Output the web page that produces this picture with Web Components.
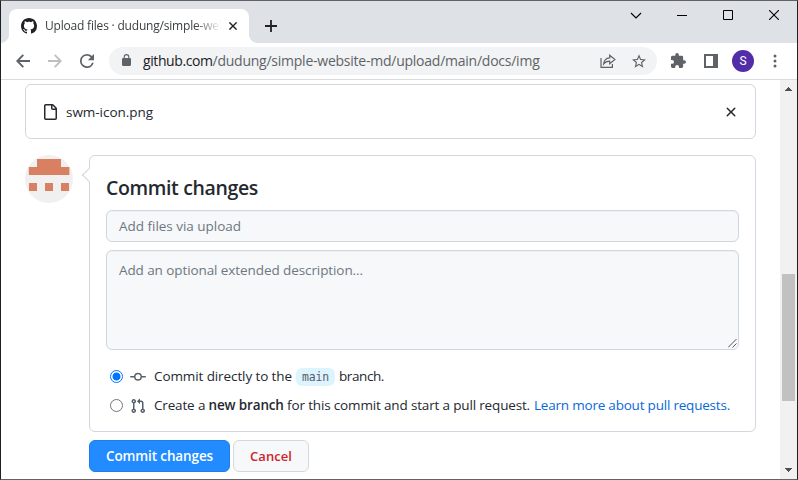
<!DOCTYPE html>
<html lang="en">
<head>
<meta charset="utf-8">
<title>Upload files · dudung/simple-website-md</title>
<style>
html,body{margin:0;height:100%;overflow:hidden}
body{font-family:"Open Sans","Noto Sans",sans-serif;font-size:13.5px;color:#24292f}
</style>
</head>
<body>
<browser-window></browser-window>
<script>
const define = (name, html, ready) => {
  const t = document.createElement('template');
  t.innerHTML = html;
  customElements.define(name, class extends HTMLElement {
    connectedCallback() {
      if (this.shadowRoot) return;
      this.attachShadow({mode: 'open'}).append(t.content.cloneNode(true));
      if (ready) ready(this);
    }
  });
};

/* A single line of text whose tracking is adjusted to fill the given width. */
define('fit-text', `<style>:host{display:inline-block;white-space:pre;flex:none}</style><slot></slot>`, el => {
  const target = +el.getAttribute('width');
  const n = el.textContent.length;
  el.style.letterSpacing = ((target - el.getBoundingClientRect().width) / n) + 'px';
  el.style.width = target + 'px';
});

const icons = {
  github: ['0 0 16 16', '<path fill="currentColor" d="M8 0C3.58 0 0 3.58 0 8c0 3.54 2.29 6.53 5.47 7.59.4.07.55-.17.55-.38 0-.19-.01-.82-.01-1.49-2.01.37-2.53-.49-2.69-.94-.09-.23-.48-.94-.82-1.13-.28-.15-.68-.52-.01-.53.63-.01 1.08.58 1.23.82.72 1.21 1.87.87 2.33.66.07-.52.28-.87.51-1.07-1.78-.2-3.64-.89-3.64-3.95 0-.87.31-1.59.82-2.15-.08-.2-.36-1.02.08-2.12 0 0 .67-.21 2.2.82.64-.18 1.32-.27 2-.27s1.36.09 2 .27c1.53-1.04 2.2-.82 2.2-.82.44 1.1.16 1.92.08 2.12.51.56.82 1.27.82 2.15 0 3.07-1.87 3.75-3.65 3.95.29.25.54.73.54 1.48 0 1.07-.01 1.93-.01 2.2 0 .21.15.46.55.38A8.01 8.01 0 0 0 16 8c0-4.42-3.58-8-8-8z"/>'],
  close: ['0 0 8 8', '<path stroke="currentColor" stroke-width="1.4" d="M.4.4l7.2 7.2M7.600.4L.4 7.600"/>'],
  plus: ['0 0 12 12', '<path stroke="currentColor" stroke-width="1.8" d="M6 0v12M0 6h12"/>'],
  chevron: ['0 0 12 12', '<path fill="none" stroke="currentColor" stroke-width="1.1" d="M1 3l5 5 5-5"/>'],
  min: ['0 0 10 10', '<path fill="currentColor" d="M0 5h10v1H0z"/>'],
  max: ['0 0 10 10', '<path fill="none" stroke="currentColor" d="M.5.5h9v9h-9z"/>'],
  wclose: ['0 0 10 10', '<path stroke="currentColor" stroke-width="1.1" d="M0 0l10 10M10 0L0 10"/>'],
  back: ['0 0 14 14', '<path fill="none" stroke="currentColor" stroke-width="1.9" d="M14 7H1.6M7.3.8L1.3 7l6 6.2"/>'],
  forward: ['0 0 14 14', '<path fill="none" stroke="currentColor" stroke-width="1.9" d="M0 7h12.4M6.7.8l6 6.2-6 6.2"/>'],
  reload: ['4 4 16 16', '<path fill="currentColor" d="M17.65 6.35A7.96 7.96 0 0 0 12 4a8 8 0 1 0 7.73 10h-2.08A6 6 0 1 1 12 6c1.66 0 3.14.69 4.22 1.78L13 11h7V4z"/>'],
  lock: ['4 1 16 21', '<path fill="currentColor" d="M18 8h-1V6A5 5 0 0 0 7 6v2H6a2 2 0 0 0-2 2v10c0 1.100.9 2 2 2h12a2 2 0 0 0 2-2V10a2 2 0 0 0-2-2zM8.900 8V6a3.100 3.100 0 0 1 6.200 0v2z"/>'],
  share: ['0 0 16 14', '<path fill="none" stroke="currentColor" stroke-width="1.200" d="M1 4v9.300h11.400V10M3.600 10C4 6.300 6.200 4.200 9.700 3.900V1.200L14.900 5.500 9.700 9.800V7.200C7 7.200 5 8.100 3.600 10z"/>'],
  star: ['2 2 20 19', '<path fill="currentColor" d="M22 9.240l-7.190-.62L12 2 9.190 8.630 2 9.240l5.460 4.730L5.820 21 12 17.270 18.180 21l-1.630-7.030zM12 15.400l-3.760 2.270 1-4.280-3.320-2.880 4.380-.38L12 6.100l1.710 4.040 4.380.38-3.320 2.880 1 4.280z"/>'],
  puzzle: ['2 1 21 21', '<path fill="currentColor" d="M20.500 11H19V7a2 2 0 0 0-2-2h-4V3.500a2.500 2.500 0 0 0-5 0V5H4a2 2 0 0 0-1.990 2v3.800H3.500a2.700 2.700 0 0 1 0 5.400H2V20c0 1.100.9 2 2 2h3.800v-1.500a2.700 2.700 0 0 1 5.400 0V22H17a2 2 0 0 0 2-2v-4h1.500a2.500 2.500 0 0 0 0-5z"/>'],
  panel: ['0 0 14 14', '<path fill="currentColor" fill-rule="evenodd" d="M0 0h14v14H0zM2 2v10h7V2z"/>'],
  dots: ['0 0 4 14', '<g fill="currentColor"><circle cx="2" cy="2" r="1.500"/><circle cx="2" cy="7" r="1.500"/><circle cx="2" cy="12" r="1.500"/></g>'],
  file: ['0 0 16 16', '<path fill="currentColor" d="M3.750 1.500a.25.25 0 0 0-.25.25v12.500c0 .138.112.25.25.25h9.500a.25.25 0 0 0 .25-.25V6h-2.750A1.750 1.750 0 0 1 9 4.250V1.500zm6.750.062V4.250c0 .138.112.25.25.25h2.688l-.011-.013-2.914-2.914zM2 1.750C2 .784 2.784 0 3.750 0h6.586c.464 0 .909.184 1.237.513l2.914 2.914c.329.328.513.773.513 1.237v9.586A1.750 1.750 0 0 1 13.250 16h-9.500A1.750 1.750 0 0 1 2 14.250z"/>'],
  x: ['0 0 16 16', '<path fill="currentColor" d="M3.720 3.720a.75.75 0 0 1 1.060 0L8 6.940l3.220-3.220a.75.75 0 1 1 1.060 1.060L9.060 8l3.220 3.220a.75.75 0 1 1-1.060 1.060L8 9.060l-3.220 3.220a.75.75 0 0 1-1.060-1.060L6.940 8 3.720 4.780a.75.75 0 0 1 0-1.060z"/>'],
  commit: ['0 0 16 16', '<path fill="currentColor" fill-rule="evenodd" d="M10.500 7.750a2.500 2.500 0 1 1-5 0 2.500 2.500 0 0 1 5 0zm1.430.75a4.002 4.002 0 0 1-7.860 0H.75a.75.75 0 0 1 0-1.500h3.320a4.001 4.001 0 0 1 7.860 0h3.320a.75.75 0 0 1 0 1.500z"/>'],
  pull: ['0 0 16 16', '<path fill="currentColor" fill-rule="evenodd" d="M7.177 3.073L9.573.677A.25.25 0 0 1 10 .854v4.792a.25.25 0 0 1-.427.177L7.177 3.427a.25.25 0 0 1 0-.354zM3.750 2.500a.75.75 0 1 0 0 1.500.75.75 0 0 0 0-1.500zm-2.250.75a2.250 2.250 0 1 1 3 2.122v5.256a2.251 2.251 0 1 1-1.500 0V5.372A2.250 2.250 0 0 1 1.500 3.250zM11 2.500h-1V4h1a1 1 0 0 1 1 1v5.628a2.251 2.251 0 1 0 1.500 0V5A2.500 2.500 0 0 0 11 2.500zm1 10.250a.75.75 0 1 1 1.500 0 .75.75 0 0 1-1.500 0zM3.750 12a.75.75 0 1 0 0 1.500.75.75 0 0 0 0-1.500z"/>'],
  up: ['0 0 7 4', '<path fill="currentColor" d="M3 0h1v1h1v1h1v1h1v1H0V3h1V2h1V1h1z"/>'],
  down: ['0 0 7 4', '<path fill="currentColor" d="M0 0h7v1H6v1H5v1H4v1H3V3H2V2H1V1H0z"/>'],
  grip: ['0 0 9 9', '<path stroke="currentColor" stroke-width=".9" d="M0 8.500L8.500 0M4.500 8.500l4-4"/>']
};
define('ui-icon', `<style>:host{display:block;flex:none}svg{display:block;width:100%;height:100%}</style><svg></svg>`, el => {
  const [box, body] = icons[el.getAttribute('name')];
  const s = el.shadowRoot.querySelector('svg');
  s.setAttribute('viewBox', box);
  s.innerHTML = body;
  const [w, h] = el.getAttribute('size').split('x');
  el.style.width = w + 'px';
  el.style.height = (h || w) + 'px';
});

define('tab-strip', `<style>
:host{display:flex;height:42px;background:#dee1e6;color:#202124}
.tab{position:relative;box-sizing:border-box;width:240px;height:34px;margin:8px 0 0 8px;background:#fff;border-radius:8px 8px 0 0;display:flex;align-items:center;padding:0 12px}
.tab:before,.tab:after{content:"";position:absolute;bottom:0;width:8px;height:8px}
.tab:before{left:-8px;background:radial-gradient(circle at 0 0,transparent 7.500px,#fff 8px)}
.tab:after{right:-8px;background:radial-gradient(circle at 100% 0,transparent 7.500px,#fff 8px)}
.title{width:181px;margin:0 3px 0 8px;font-size:12px;line-height:20px;color:#3c4043;-webkit-mask-image:linear-gradient(90deg,#000 150px,transparent 176px)}
.plus{margin:19px auto 0 16px}
.win{display:flex;margin-top:9px;color:#000}
.win ui-icon:nth-child(1){margin:0 35px 0 0}.win ui-icon:nth-child(2){margin-right:36px}.win ui-icon:nth-child(3){margin-right:36px}.win ui-icon:nth-child(4){margin-right:18px}
</style>
<div class="tab"><ui-icon name="github" size="16"></ui-icon><div class="title"><fit-text width="181">Upload files · dudung/simple-web</fit-text></div><ui-icon name="close" size="8"></ui-icon></div>
<ui-icon class="plus" name="plus" size="12"></ui-icon>
<div class="win"><ui-icon name="chevron" size="12"></ui-icon><ui-icon name="min" size="10"></ui-icon><ui-icon name="max" size="10"></ui-icon><ui-icon name="wclose" size="10"></ui-icon></div>`);

define('tool-bar', `<style>
:host{display:flex;align-items:center;box-sizing:border-box;height:37px;padding:0 0 1px 15px;background:#fff;border-bottom:1px solid #d9dbde;color:#5f6368}
.fwd{color:#bdc0c3;margin:0 18px}
.box{flex:none;box-sizing:border-box;display:flex;align-items:center;width:548px;height:28px;border-radius:14px;background:#f1f3f4;margin:0 14px 0 15px;padding:0 11px 0 13px;font-size:14px;line-height:26px}
.box>:first-child{margin:0 12px 2px 0}.host{color:#202124}
.share{margin-left:auto;margin-right:16px}
.me{box-sizing:border-box;width:22px;height:22px;border-radius:50%;background:#512da8;color:#fff;font:12px/22px Roboto,sans-serif;text-align:center;margin:0 19px 0 14px}
.panel{margin-left:18px}
</style>
<ui-icon name="back" size="14"></ui-icon><ui-icon class="fwd" name="forward" size="14"></ui-icon><ui-icon name="reload" size="14"></ui-icon>
<div class="box"><ui-icon name="lock" size="9x12"></ui-icon><fit-text class="host" width="69.500">github.com</fit-text><fit-text width="327">/dudung/simple-website-md/upload/main/docs/img</fit-text><ui-icon class="share" name="share" size="16x14"></ui-icon><ui-icon name="star" size="14"></ui-icon></div>
<ui-icon name="puzzle" size="15"></ui-icon><ui-icon class="panel" name="panel" size="14"></ui-icon><div class="me">S</div><ui-icon name="dots" size="4x14"></ui-icon>`);

define('file-row', `<style>
:host{display:flex;align-items:center;box-sizing:border-box;height:55px;border:1px solid #d0d7de;border-radius:6px;padding:0 16px}
fit-text{margin:0 auto 0 8px;line-height:20px}
</style><ui-icon name="file" size="16"></ui-icon><fit-text width="87"><slot></slot></fit-text><ui-icon name="x" size="16"></ui-icon>`,
  el => {
    const label = el.shadowRoot.querySelector('fit-text');
    label.style.letterSpacing = '0';
    label.style.width = '';
    const w = label.getBoundingClientRect().width;
    label.style.letterSpacing = ((87 - w) / el.textContent.length) + 'px';
    label.style.width = '87px';
  });

define('user-avatar', `<style>:host{display:block;flex:none;width:48px;height:48px;border-radius:50%;overflow:hidden}svg{display:block}</style>
<svg width="48" height="48"><path fill="#f0f0f0" d="M0 0h48v48H0z"/><path fill="#d98063" d="M12 4h24v8h8.400v8H3.800v-8H12zM4 28h8v8H4zM20 28h8v8h-8zM36 28h8v8h-8z"/></svg>`);

define('text-field', `<style>
:host{position:relative;display:block;box-sizing:border-box;background:#f6f8fa;border:1px solid #d0d7de;border-radius:6px;padding:5px 12px;line-height:20px;color:#6e7781;box-shadow:inset 0 1px 0 rgba(208,215,222,.2)}
:host([tall]){height:100px;padding-top:9px}
ui-icon{display:none;position:absolute;right:1px;bottom:1px;color:#444}:host([tall]) ui-icon{display:block}
</style><slot></slot><ui-icon name="grip" size="9"></ui-icon>`);

define('radio-row', `<style>
:host{display:flex;align-items:center;height:20px;line-height:20px}
.radio{box-sizing:border-box;width:13px;height:13px;border:1px solid #767676;border-radius:50%;margin:0 7px 2px 4px;background:#fff;flex:none}
:host([checked]) .radio{border-color:#0075ff;background:radial-gradient(circle,#0075ff 3.700px,#fff 4.300px)}
ui-icon{color:#57606a}
.text{display:flex;margin:-2px 0 0 8px}
</style><div class="radio"></div><slot name="icon"></slot><div class="text"><slot></slot></div>`);

define('branch-name', `<style>:host{display:block;width:39px;height:18px;margin:2px 4px 0;border-radius:6px;background:#ddf4ff;color:#57606a;font:11.500px/18px "DejaVu Sans Mono","Liberation Mono",monospace;text-align:center}</style><fit-text width="27"><slot></slot></fit-text>`,
  el => { const f = el.shadowRoot.querySelector('fit-text'); f.style.letterSpacing = '-.2px'; });

define('ui-button', `<style>
:host{display:flex;justify-content:center;align-items:center;box-sizing:border-box;width:76px;height:32px;border:1px solid #d5d8da;border-radius:6px;background:#f6f8fa;color:#cf222e;font-weight:600;font-size:13px;line-height:20px}
:host([primary]){width:141px;background:#218bff;border-color:#1f7fe6;color:#fff;font-size:13.500px}
</style><slot></slot>`);

define('commit-form', `<style>
:host{display:flex;gap:16px;align-items:flex-start;margin-top:16px}
.main{flex:1}
.card{position:relative;box-sizing:border-box;height:277px;border:1px solid #d0d7de;border-radius:6px;padding:17px 16px}
.card:before{content:"";position:absolute;left:-6px;top:14px;width:9px;height:9px;background:#fff;border:solid #d0d7de;border-width:0 0 1px 1px;transform:rotate(45deg)}
h3{margin:0;font-size:19.500px;line-height:30px;font-weight:600;height:37px}
text-field+text-field{margin-top:8px}
radio-row{margin-top:9px}text-field+radio-row{margin-top:17px}
ui-icon{color:#57606a}
b{font-weight:600}
.actions{display:flex;gap:3px;margin-top:8px}
.link{color:#0969da;margin-left:4px}
</style>
<user-avatar></user-avatar>
<div class="main"><div class="card">
<h3><fit-text width="152">Commit changes</fit-text></h3>
<text-field><fit-text width="122">Add files via upload</fit-text></text-field>
<text-field tall><fit-text width="244">Add an optional extended description…</fit-text></text-field>
<radio-row checked><ui-icon slot="icon" name="commit" size="16"></ui-icon><fit-text width="138">Commit directly to the</fit-text><branch-name>main</branch-name><fit-text width="45">branch.</fit-text></radio-row>
<radio-row><ui-icon slot="icon" name="pull" size="16"></ui-icon><fit-text width="376">Create a <b>new branch</b> for this commit and start a pull request.</fit-text><fit-text class="link" width="196">Learn more about pull requests.</fit-text></radio-row>
</div>
<div class="actions"><ui-button primary><fit-text width="107">Commit changes</fit-text></ui-button><ui-button><fit-text width="42">Cancel</fit-text></ui-button></div></div>`);

define('scroll-bar', `<style>
:host{display:flex;flex-direction:column;align-items:center;flex:none;width:17px;background:#f1f1f1;color:#505050}
.thumb{width:13px;height:127px;background:#c1c1c1;margin:183px 0 auto}
ui-icon:first-of-type{margin-top:7px}ui-icon:last-of-type{margin-bottom:7px}
</style><ui-icon name="up" size="7x4"></ui-icon><div class="thumb"></div><ui-icon name="down" size="7x4"></ui-icon>`);

define('browser-window', `<style>
:host{display:flex;flex-direction:column;box-sizing:border-box;width:798px;height:480px;background:#fff;border:1px solid #202124;border-top-color:#626366;border-bottom-color:#626366;overflow:hidden}
.view{flex:1;display:flex;min-height:0}
.page{flex:1;padding:4px 24px 0}
</style>
<tab-strip></tab-strip><tool-bar></tool-bar>
<div class="view"><div class="page"><file-row>swm-icon.png</file-row><commit-form></commit-form></div><scroll-bar></scroll-bar></div>`);
</script>
</body>
</html>
